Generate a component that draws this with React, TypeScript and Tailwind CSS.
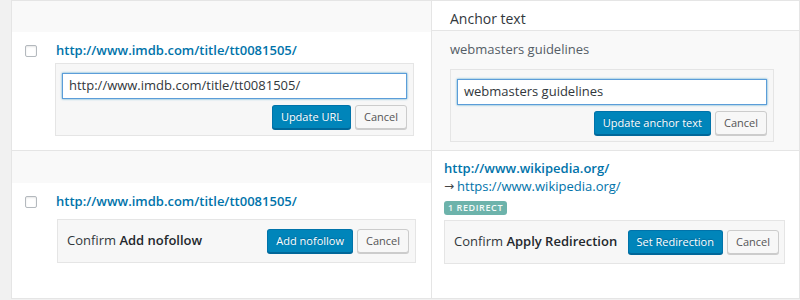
import React from "react";

const linkCls = "text-[13px] leading-[18px] font-semibold text-[#0073aa]";

function Checkbox() {
  return (
    <span className="mt-[13px] block h-3 w-3 shrink-0 rounded-[2px] border border-[#b4b9be] bg-white shadow-[inset_0_1px_2px_rgba(0,0,0,0.1)]" />
  );
}

function PrimaryButton({ children }: { children: React.ReactNode }) {
  return (
    <button className="h-6 whitespace-nowrap rounded-[3px] border border-[#0073aa] border-b-[#006799] bg-[#0085ba] px-2 text-[11px] leading-[22px] text-white shadow-[0_1px_0_#006799] [text-shadow:0_-1px_1px_#006799]">
      {children}
    </button>
  );
}

function CancelButton() {
  return (
    <button className="h-6 whitespace-nowrap rounded-[3px] border border-[#cccccc] bg-[#f7f7f7] px-2 text-[11px] leading-[22px] text-[#555555] shadow-[0_1px_0_#cccccc]">
      Cancel
    </button>
  );
}

function EditBox({ value, action, width }: { value: string; action: string; width: string }) {
  return (
    <div className={`${width} border border-[#e5e5e5] bg-[#f7f7f7] px-[6px] pt-[9px] pb-[6px]`}>
      <div className="flex h-[26px] items-center border border-[#5b9dd9] bg-white px-[6px] text-[13px] text-[#32373c] shadow-[0_0_2px_rgba(30,140,190,0.8)]">
        {value}
      </div>
      <div className="mt-[6px] flex justify-end gap-1">
        <PrimaryButton>{action}</PrimaryButton>
        <CancelButton />
      </div>
    </div>
  );
}

function ConfirmBox({
  label,
  action,
  className,
}: {
  label: string;
  action: string;
  className: string;
}) {
  return (
    <div className={`flex h-[44px] items-center justify-between border border-[#e5e5e5] bg-[#f7f7f7] pl-[9px] ${className}`}>
      <span className="text-[13px] text-[#32373c]">
        Confirm <span className="font-semibold text-[#23282d]">{label}</span>
      </span>
      <div className="flex gap-1">
        <PrimaryButton>{action}</PrimaryButton>
        <CancelButton />
      </div>
    </div>
  );
}

export default function App() {
  return (
    <div className="h-[300px] w-[800px] bg-[#f1f1f1] pl-[11px] font-['Open_Sans',sans-serif]">
      <div className="grid h-[299px] grid-cols-[420px_368px] grid-rows-[150px_148px] border-t border-l border-b border-[#e5e5e5] bg-white">
        {/* row 1, url */}
        <div className="flex flex-col border-r border-b border-[#e5e5e5]">
          <div className="h-[31px] shrink-0 bg-[#f9f9f9]" />
          <div className="flex pl-[13px]">
            <Checkbox />
            <div className="ml-[19px] flex flex-col">
              <a className={`${linkCls} mt-[9px]`}>http://www.imdb.com/title/tt0081505/</a>
              <div className="-ml-px mt-[4px]">
                <EditBox value="http://www.imdb.com/title/tt0081505/" action="Update URL" width="w-[359px]" />
              </div>
            </div>
          </div>
        </div>

        {/* row 1, anchor text */}
        <div className="flex flex-col border-r border-b border-[#e5e5e5]">
          <div className="h-[30px] shrink-0 border-b border-[#e5e5e5] pl-[18px] pt-[8px] text-[14px] leading-[20px] text-[#32373c]">
            Anchor text
          </div>
          <div className="flex-1 bg-[#f9f9f9] pl-[18px]">
            <div className="mt-[9px] text-[13px] leading-[18px] text-[#555d66]">webmasters guidelines</div>
            <div className="mt-[11px]">
              <EditBox value="webmasters guidelines" action="Update anchor text" width="w-[324px]" />
            </div>
          </div>
        </div>

        {/* row 2, url */}
        <div className="flex flex-col border-r border-[#e5e5e5]">
          <div className="h-[32px] shrink-0 bg-[#f9f9f9]" />
          <div className="flex pl-[13px]">
            <Checkbox />
            <div className="ml-[19px] flex flex-col">
              <a className={`${linkCls} mt-[9px]`}>http://www.imdb.com/title/tt0081505/</a>
              <div className="ml-px mt-[9px]">
                <ConfirmBox label="Add nofollow" action="Add nofollow" className="w-[359px] pr-[6px]" />
              </div>
            </div>
          </div>
        </div>

        {/* row 2, redirect */}
        <div className="flex flex-col border-r border-[#e5e5e5] pl-[12px] pt-[8px]">
          <a className={linkCls}>http://www.wikipedia.org/</a>
          <div className="flex items-center text-[13px] leading-[18px] text-[#32373c]">
            <span className="mr-[3px] font-['DejaVu_Sans',sans-serif] text-[12px] text-[#444444]">→</span>
            <a className="text-[#0073aa]">https://www.wikipedia.org/</a>
          </div>
          <span className="mt-[6px] flex h-[14px] w-[63px] items-center justify-center rounded-[3px] bg-[#6db3ab] text-[9px] font-semibold tracking-[0.6px] text-[#f4faf9]">
            1 REDIRECT
          </span>
          <div className="mt-[5px]">
            <ConfirmBox label="Apply Redirection" action="Set Redirection" className="w-[341px] pr-[5px]" />
          </div>
        </div>
      </div>
    </div>
  );
}
